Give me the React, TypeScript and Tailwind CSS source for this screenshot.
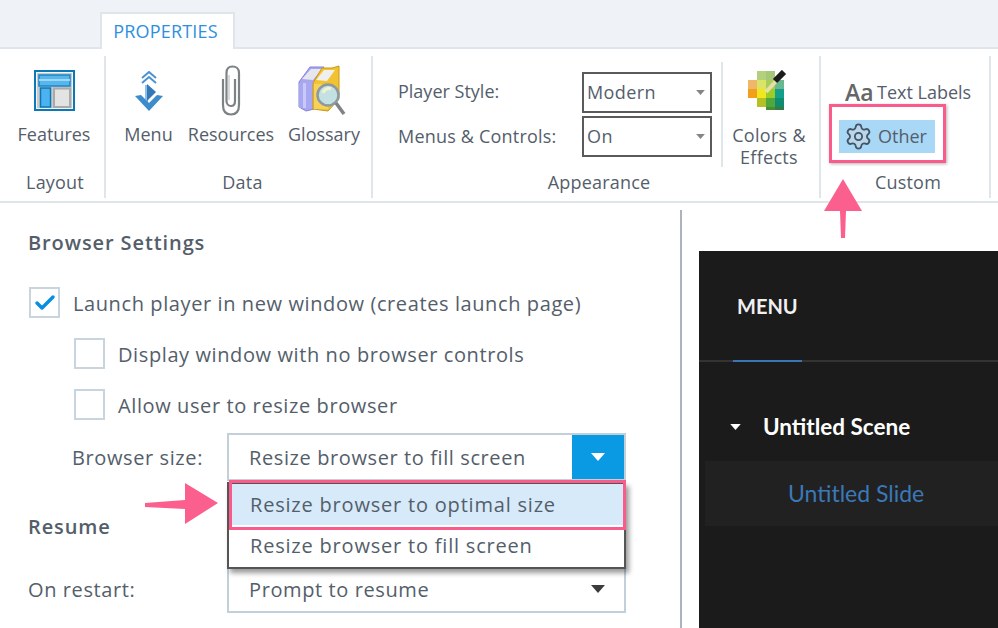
import React from 'react';
import { Settings, Check } from 'lucide-react';

const FeaturesIcon = () => (
    <svg width="41" height="41" viewBox="0 0 41 41">
        <rect x="1" y="1" width="39" height="39" fill="#f4f4f4" stroke="#0b78b8" strokeWidth="2" />
        <rect x="3" y="3" width="35" height="35" fill="#cacaca" />
        <rect x="5" y="5" width="31" height="11" fill="#58b6ee" stroke="#1a86c8" strokeWidth="1.5" />
        <rect x="5" y="9" width="31" height="2" fill="#9dd6f7" />
        <rect x="6.5" y="18" width="10" height="19" fill="#4db2f0" stroke="#0b78b8" strokeWidth="1.5" />
        <rect x="20" y="18.5" width="16" height="18.5" fill="#e3e3e3" stroke="#aaaaaa" strokeWidth="2" />
    </svg>
);

const MenuIcon = () => (
    <svg width="28" height="40" viewBox="0 0 28 40" fill="none">
        <path d="M7 7 L14 1 L21 7 M7 12 L14 6 L21 12" stroke="#4a93d2" strokeWidth="2" />
        <path d="M10 14 H13 V31 H10 Z" fill="#8fc0e8" />
        <path d="M12 13 L21 21 L12 30 Z" fill="#3478b8" />
        <path d="M0 25 L6 24 L14 32 L22 24 L28 25 L14 40 Z" fill="#3d8ccb" />
    </svg>
);

const ClipIcon = () => (
    <svg width="20" height="51" viewBox="0 0 20 51" fill="none">
        <path d="M2 14 V40 C2 46 5 49.5 10 49.5 C15 49.5 18 46 18 40 V8 C18 3.5 15 1.5 11.5 1.5 C8 1.5 5.5 3.5 5.5 8 V36 C5.5 39 7.5 41 10 41 C12.5 41 14 39 14 36 V14" stroke="#7d8285" strokeWidth="2.2" />
        <path d="M8 10 V35" stroke="#d8dadb" strokeWidth="2" />
    </svg>
);

const GlossaryIcon = () => (
    <svg width="48" height="52" viewBox="0 0 48 52" className="mr-[5px]">
        <path d="M1 17 L12 2 H26 L16 17 V44 L8 46 L1 42 Z" fill="#a9a6ee" stroke="#8582d8" />
        <path d="M4 14 L13 4 H24 L15 15 Z" fill="#e6e6ee" />
        <rect x="1" y="18" width="15" height="25" fill="#a8a8f2" />
        <rect x="5" y="18" width="3" height="25" fill="#c8c8fa" />
        <path d="M15 18 L24 3 H34 L41 1 V34 L30 46 L15 44 Z" fill="#f2c230" stroke="#c79a18" />
        <path d="M18 15 L26 5 H37 L29 16 Z" fill="#efefef" />
        <rect x="16" y="19" width="14" height="25" fill="#f6d25a" />
        <circle cx="30" cy="30" r="10.5" fill="#c3e0e2" stroke="#8c9aa0" strokeWidth="2.5" />
        <path d="M25 28 A6 6 0 0 1 33 24" stroke="#f3f3d0" strokeWidth="3" fill="none" />
        <path d="M38 38 L46 49" stroke="#7f8286" strokeWidth="3.5" />
    </svg>
);

const ColorsIcon = () => (
    <svg width="40" height="40" viewBox="0 0 40 40">
        <rect x="10" y="1" width="9" height="9" fill="#b4d07c" />
        <rect x="19" y="1" width="9" height="9" fill="#a4c878" />
        <rect x="1" y="10" width="9" height="9" fill="#eeb868" />
        <rect x="10" y="10" width="9" height="9" fill="#dbe468" />
        <rect x="19" y="10" width="9" height="9" fill="#a8cc58" />
        <rect x="28" y="10" width="9" height="9" fill="#6ab890" />
        <rect x="1" y="19" width="9" height="9" fill="#f2a01c" />
        <rect x="10" y="19" width="9" height="9" fill="#f2e620" />
        <rect x="19" y="19" width="9" height="9" fill="#9ccc28" />
        <rect x="28" y="19" width="9" height="9" fill="#12a08c" />
        <rect x="10" y="28" width="9" height="9" fill="#b4c024" />
        <rect x="19" y="28" width="9" height="9" fill="#4ea83c" />
        <rect x="28" y="28" width="9" height="9" fill="#108c70" />
        <rect x="19" y="37" width="9" height="3" fill="#4c8c30" />
        <rect x="28" y="37" width="9" height="3" fill="#387c44" />
        <path d="M19 22 L31 9" stroke="#e6dfa6" strokeWidth="4" />
        <path d="M28 11 L37 2" stroke="#1c1c1c" strokeWidth="6" />
    </svg>
);

const Caret = ({ className }: { className: string }) => (
    <svg width="14" height="8" viewBox="0 0 14 8" className={className}>
        <path d="M0 0 H14 L7 8 Z" fill="currentColor" />
    </svg>
);

const RibbonItem = ({ label, icon, width }: { label: string; icon: React.ReactNode; width?: string }) => (
    <div className={`flex flex-col items-center ${width ?? ''}`}>
        <div className="h-[69px] flex items-center justify-center">{icon}</div>
        <span className="mt-[-3px] leading-6">{label}</span>
    </div>
);

const RibbonSelect = ({ value }: { value: string }) => (
    <div className="w-[130px] h-[41px] border-2 border-[#5a5a5a] flex items-center justify-between pl-[3px] pr-[5px]">
        <span className="tracking-[0.4px]">{value}</span>
        <Caret className="w-[9px] h-[5px] text-[#858585]" />
    </div>
);

const Group = ({ label, className, labelClass, children }: { label: string; className: string; labelClass?: string; children: React.ReactNode }) => (
    <div className={`h-[142px] flex flex-col border-r-2 border-[#dfe6ea] ${className}`}>
        <div className="h-[114px]">{children}</div>
        <div className={`text-center leading-6 tracking-[0.2px] ${labelClass ?? ''}`}>{label}</div>
    </div>
);

const CheckRow = ({ label, checked, className }: { label: string; checked?: boolean; className: string }) => (
    <div className={`flex items-center gap-[13px] ${className}`}>
        <div className="w-[31px] h-[31px] border-2 border-[#c8d5de] flex items-center justify-center">
            {checked && <Check size={24} strokeWidth={3.5} className="text-[#0a8fe0]" />}
        </div>
        <span className="pt-[3px] leading-6">{label}</span>
    </div>
);

export default function App() {
    return (
        <div className="relative w-[998px] h-[628px] overflow-hidden bg-white font-['Open_Sans',sans-serif] text-[18px] text-[#545e6b]">
            {/* tab strip */}
            <div className="h-[49px] bg-[#eff3f7] border-b-2 border-[#dfe6ea] pl-[100px] pt-[12px]">
                <div className="w-[135px] h-[37px] bg-white border-2 border-b-0 border-[#dfe6ea] flex items-center justify-center pr-[4px] tracking-[0.2px] text-[#2d8fe0]">
                    PROPERTIES
                </div>
            </div>

            {/* ribbon */}
            <div className="h-[154px] pt-[7px] border-b-2 border-[#dfe6ea] flex">
                <Group label="Layout" className="w-[106px]" labelClass="pl-[6px]">
                    <div className="flex justify-center pl-[4px]">
                        <RibbonItem label="Features" icon={<FeaturesIcon />} />
                    </div>
                </Group>

                <Group label="Data" className="w-[267px]" labelClass="pl-[8px]">
                    <div className="flex pl-[17px] gap-[13px]">
                        <RibbonItem label="Menu" icon={<MenuIcon />} width="w-[51px]" />
                        <RibbonItem label="Resources" icon={<ClipIcon />} width="w-[88px]" />
                        <RibbonItem label="Glossary" icon={<GlossaryIcon />} width="w-[72px]" />
                    </div>
                </Group>

                <Group label="Appearance" className="w-[448px] pl-[6px]">
                    <div className="flex pl-[19px] pt-[13px]">
                        <div className="w-[184px] flex flex-col">
                            <div className="h-[45px] flex items-center">Player Style:</div>
                            <div className="h-[44px] flex items-center tracking-[0.2px]">Menus &amp; Controls:</div>
                        </div>
                        <div className="flex flex-col gap-[3px] pt-[3px]">
                            <RibbonSelect value="Modern" />
                            <RibbonSelect value="On" />
                        </div>
                        <div className="ml-[9px] mt-[-7px] h-[105px] w-[2px] bg-[#dfe6ea]" />
                        <div className="w-[92px] flex flex-col items-center">
                            <div className="mt-[1px] h-[40px] pr-[4px]"><ColorsIcon /></div>
                            <div className="mt-[14px] text-center leading-[22px] tracking-[0.3px]">Colors &amp;<br />Effects</div>
                        </div>
                    </div>
                </Group>

                <Group label="Custom" className="w-[170px]" labelClass="pl-[6px]">
                    <div className="pl-[24px] pt-[23px]">
                        <div className="flex items-center h-[26px]">
                            <span className="w-[32px] text-[23px] font-semibold text-[#666666]">Aa</span>
                            <span>Text Labels</span>
                        </div>
                        <div className="relative mt-[15px] ml-[-6px] w-[96px] h-[33px] bg-[#a9d7f6] flex items-center pl-[5px] gap-[5px]">
                            <Settings size={29} strokeWidth={1.5} className="text-[#3f5568] fill-[#bcd5e8]" />
                            <span>Other</span>
                            <div className="absolute left-[-10px] top-[-16px] w-[117px] h-[59px] border-[3px] border-[#f95c8b] shadow-[1px_1px_3px_rgba(0,0,0,0.3)]" />
                        </div>
                    </div>
                </Group>
            </div>

            {/* settings and preview */}
            <div className="mt-[7px] flex">
                <div className="w-[682px] h-[418px] border-r-2 border-[#a9b4be] pl-[28px] pt-[19px] text-[20px] tracking-[0.6px]">
                    <div className="font-semibold leading-7 tracking-[0.9px]">Browser Settings</div>
                    <CheckRow className="mt-[30px] ml-[1px]" label="Launch player in new window (creates launch page)" checked />
                    <CheckRow className="mt-[20px] ml-[46px]" label="Display window with no browser controls" />
                    <CheckRow className="mt-[20px] ml-[46px]" label="Allow user to resize browser" />

                    <div className="mt-[13px] flex items-center ml-[44px]">
                        <span className="w-[155px] pt-[1px]">Browser size:</span>
                        <div className="relative w-[399px] h-[48px] border-2 border-[#c3d0da] flex items-center justify-between pl-[20px]">
                            <span className="pt-[1px]">Resize browser to fill screen</span>
                            <div className="w-[52px] h-[44px] bg-[#0a9ae3] flex items-center justify-center">
                                <Caret className="text-white" />
                            </div>
                            <div className="absolute left-[-2px] top-[47px] w-[399px] h-[87px] bg-white border-2 border-[#555555] shadow-[3px_4px_5px_rgba(0,0,0,0.4)] tracking-[0.8px]">
                                <div className="h-[41px] bg-[#d6eaf9] flex items-center pl-[21px]">Resize browser to optimal size</div>
                                <div className="h-[41px] flex items-center pl-[21px]">Resize browser to fill screen</div>
                            </div>
                            <div className="absolute left-[0px] top-[45px] w-[397px] h-[50px] border-[3px] border-[#f95c8b]" />
                        </div>
                    </div>

                    <div className="mt-[32px] font-semibold leading-7 tracking-[0.9px]">Resume</div>
                    <div className="mt-[24px] flex items-center">
                        <span className="w-[199px] pt-[1px]">On restart:</span>
                        <div className="w-[399px] h-[48px] border-2 border-[#c3d0da] flex items-center justify-between pl-[20px] pr-[19px]">
                            <span className="pt-[1px]">Prompt to resume</span>
                            <Caret className="text-[#3c3c3c]" />
                        </div>
                    </div>
                </div>

                <div className="flex-1 pl-[17px] pt-[41px]">
                    <div className="h-[380px] bg-[#1b1b1b] text-white font-['Lato',sans-serif]">
                        <div className="h-[111px] border-b-2 border-[#333333] relative pl-[38px] pt-[43px]">
                            <span className="font-bold text-[20px] leading-6 block text-[#f0f0f0]">MENU</span>
                            <div className="absolute left-[34px] bottom-[-2px] w-[69px] h-[2px] bg-[#3a75b5]" />
                        </div>
                        <div className="mt-[51px] flex items-center pl-[31px] gap-[22px]">
                            <Caret className="w-[11px] h-[6px] text-white" />
                            <span className="font-bold text-[22.5px] leading-7">Untitled Scene</span>
                        </div>
                        <div className="mt-[20px] ml-[6px] h-[65px] bg-[#212121] flex items-center pl-[83px] text-[23px] text-[#3b78b8]">
                            Untitled Slide
                        </div>
                    </div>
                </div>
            </div>

            {/* callout arrows */}
            <svg className="absolute left-[820px] top-[175px]" width="46" height="66" viewBox="0 0 46 66">
                <path d="M23 4 L42 36 L26 36 L25 63 L21 63 L20 36 L4 36 Z" fill="#fb5f8e" />
            </svg>
            <svg className="absolute left-[140px] top-[480px]" width="82" height="48" viewBox="0 0 82 48">
                <path d="M78 23 L45 44 L45 29 L5 27 L5 23 L45 20 L45 3 Z" fill="#fb5f8e" />
            </svg>
        </div>
    );
}
